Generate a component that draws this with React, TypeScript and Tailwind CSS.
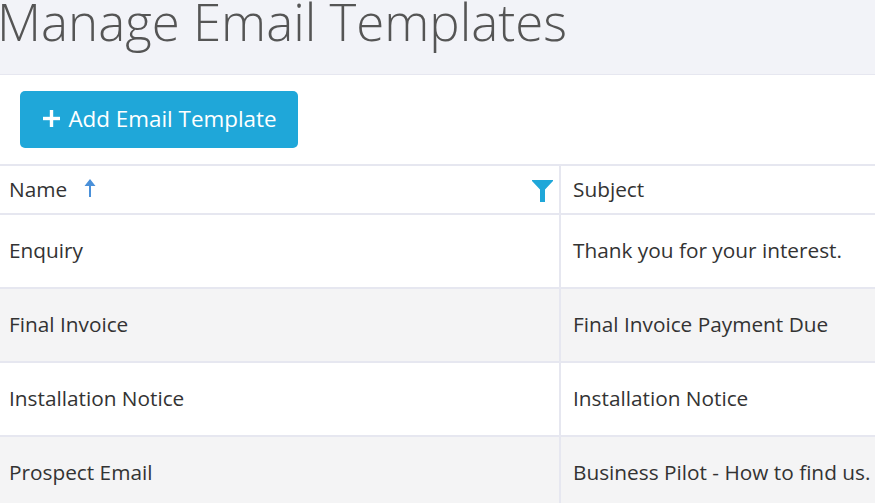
import React from 'react';

const templates = [
  { name: 'Enquiry', subject: 'Thank you for your interest.' },
  { name: 'Final Invoice', subject: 'Final Invoice Payment Due' },
  { name: 'Installation Notice', subject: 'Installation Notice' },
  { name: 'Prospect Email', subject: 'Business Pilot - How to find us.' },
];

const App: React.FC = () => {
  return (
    <div className="h-[503px] w-[875px] overflow-hidden bg-white font-['Open_Sans',sans-serif] text-[#333]">
      {/* Page title */}
      <div className="h-[75px] overflow-hidden border-b border-[#e6e7f0] bg-[#f2f3f8]">
        <h1 className="-ml-[3px] -mt-[13px] whitespace-nowrap text-[51px] font-light leading-[68px] text-[#555]">
          Manage Email Templates
        </h1>
      </div>

      {/* Toolbar */}
      <div className="flex h-[89px] items-start px-5 pt-4">
        <button className="flex h-[57px] w-[278px] items-center justify-center gap-[8px] rounded-[5px] bg-[#1fa7d9] pl-[2px] text-[22.4px] text-white">
          <svg width="17" height="17" viewBox="0 0 17 17" className="-mt-[3px] fill-white">
            <rect x="6.8" y="0" width="3.4" height="17" />
            <rect x="0" y="6.8" width="17" height="3.4" />
          </svg>
          <span className="-mt-px">Add Email Template</span>
        </button>
      </div>

      {/* Table */}
      <div className="border-t-2 border-[#e6e7f0] text-[20.8px]">
        <div className="flex h-[49px] border-b-2 border-[#e6e7f0]">
          <div className="flex w-[561px] items-center border-r-2 border-[#e6e7f0] pl-[9px] pr-[6px]">
            <span>Name</span>
            <svg width="12" height="18" viewBox="0 0 12 18" className="-mt-[3px] ml-[17px] fill-[#4a90d9]">
              <path d="M6 0l5.500 7H7v11H5V7H.5z" />
            </svg>
            <svg width="21" height="22" viewBox="0 0 21 22" className="ml-auto mt-[2px] fill-[#1fa7d9]">
              <path d="M0 0h21v1l-8 8.500V22H8V9.500L0 1z" />
            </svg>
          </div>
          <div className="flex flex-1 items-center whitespace-nowrap pl-3">Subject</div>
        </div>
        {templates.map((t, i) => (
          <div
            key={t.name}
            className={`flex h-[74px] border-b-2 border-[#e6e7f0] ${i % 2 === 1 ? 'bg-[#f4f4f5]' : 'bg-white'}`}
          >
            <div className="flex w-[561px] items-center border-r-2 border-[#e6e7f0] pl-[9px]">{t.name}</div>
            <div className="flex flex-1 items-center whitespace-nowrap pl-3">{t.subject}</div>
          </div>
        ))}
      </div>
    </div>
  );
};

export default App;
